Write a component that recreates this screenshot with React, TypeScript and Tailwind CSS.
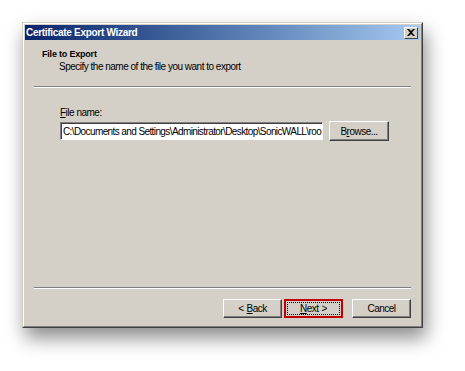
const FONT = "font-['Liberation_Sans',Arial,sans-serif]";
const TXT = "text-[10px] tracking-[-0.5px] text-black";

function Btn({ children, focused }: { children: React.ReactNode; focused?: boolean }) {
  if (focused) {
    return (
      <div className="h-[19px] w-[59px] border-2 border-[#c00000] bg-[#d4d0c8] p-px">
        <div className={`flex h-full items-center justify-center border border-dotted border-black ${TXT}`}>
          {children}
        </div>
      </div>
    );
  }
  return (
    <div className={`flex h-[19px] w-[59px] items-center justify-center border border-t-white border-l-white border-r-[#404040] border-b-[#404040] bg-[#d4d0c8] shadow-[inset_-1px_-1px_0_#808080] ${TXT}`}>
      {children}
    </div>
  );
}

export default function App() {
  return (
    <div className={`h-[371px] w-[465px] bg-white pl-[22px] pt-[22px] ${FONT}`}>
      <div className="flex h-[306px] w-[401px] flex-col border border-t-[#d4d0c8] border-l-[#d4d0c8] border-r-[#404040] border-b-[#404040] bg-[#d4d0c8] shadow-[3px_10px_18px_rgba(0,0,0,0.45)]">
        <div className="flex flex-1 flex-col border border-t-white border-l-white border-r-[#808080] border-b-[#808080] px-px pt-px">
          <div className="flex h-[15px] items-center justify-between bg-gradient-to-r from-[#0a246a] to-[#a6caf0] pl-[1px] pr-[2px]">
            <span className="text-[10px] leading-none font-bold tracking-[-0.3px] text-white">Certificate Export Wizard</span>
            <div className="flex h-[12px] w-[14px] items-center justify-center border border-t-white border-l-white border-r-[#404040] border-b-[#404040] bg-[#d4d0c8]">
              <svg width="8" height="7" viewBox="0 0 8 7">
                <path d="M0 0h2l2 2 2-2h2L5 3.5 8 7H6L4 5 2 7H0l3-3.5z" fill="#000" />
              </svg>
            </div>
          </div>
          <div className="flex h-[46px] flex-col pl-[17px] pt-[9px]">
            <span className="text-[9px] leading-[11px] font-bold tracking-[-0.2px] text-black">File to Export</span>
            <span className={`pl-[17px] leading-[13px] ${TXT}`}>Specify the name of the file you want to export</span>
          </div>
          <div className="mx-[9px] border-t border-b border-t-[#808080] border-b-white" />
          <div className="flex flex-1 flex-col pl-[35px] pt-[18px]">
            <span className={`leading-[13px] ${TXT}`}><u>F</u>ile name:</span>
            <div className="mt-[2px] flex items-center gap-[6px]">
              <div className="flex h-[18px] w-[263px] items-center overflow-hidden whitespace-nowrap border border-t-[#808080] border-l-[#808080] border-r-white border-b-white bg-white pl-[2px] text-[10px] tracking-[-0.6px] text-black shadow-[inset_1px_1px_0_#404040]">
                C:\Documents and Settings\Administrator\Desktop\SonicWALL\roo
              </div>
              <div className={`flex h-[20px] w-[60px] items-center justify-center border border-t-white border-l-white border-r-[#404040] border-b-[#404040] shadow-[inset_-1px_-1px_0_#808080] ${TXT}`}>
                B<u>r</u>owse...
              </div>
            </div>
          </div>
          <div className="mx-[9px] border-t border-b border-t-[#808080] border-b-white" />
          <div className="flex h-[37px] items-start justify-end gap-[2px] pr-[9px] pt-[10px]">
            <Btn>&lt;<span className="ml-[3px]"><u>B</u>ack</span></Btn>
            <Btn focused><u>N</u>ext<span className="ml-[3px]">&gt;</span></Btn>
            <div className="ml-[7px]"><Btn>Cancel</Btn></div>
          </div>
        </div>
      </div>
    </div>
  );
}
